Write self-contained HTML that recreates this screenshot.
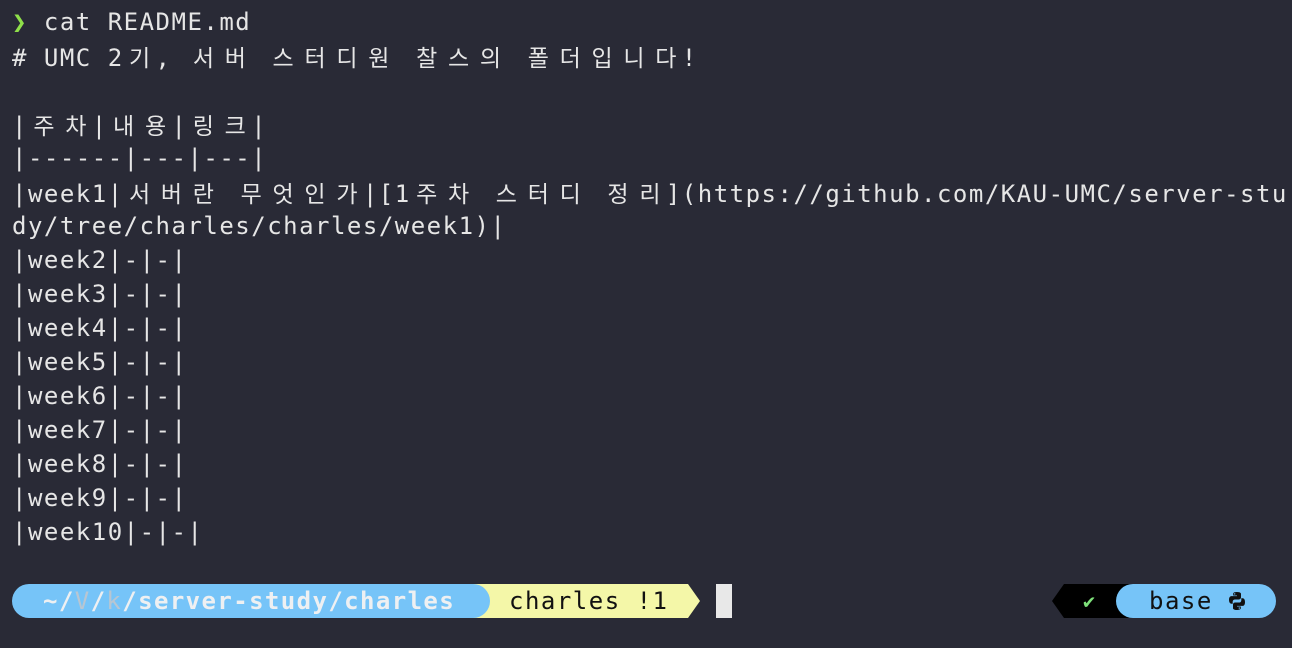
<!DOCTYPE html>
<html><head><meta charset="utf-8"><style>
html,body{margin:0;padding:0;}
body{width:1292px;height:648px;background:#292a36;overflow:hidden;position:relative;
font-family:"DejaVu Sans Mono","Liberation Mono","Noto Sans CJK KR",monospace;font-size:24px;color:#e6e6e6;}
.l{position:absolute;left:12px;height:34px;line-height:34px;white-space:pre;letter-spacing:1.5px;}
.k{display:inline-block;width:31.9px;text-align:center;letter-spacing:0;font-family:"Noto Sans CJK KR","WenQuanYi Zen Hei",sans-serif;font-size:23px;}
.g{color:#8fe04a;}
.pill{position:absolute;top:584px;height:34px;line-height:34px;white-space:pre;}
</style></head><body>
<div class="l" style="top:5px"><span class="g">❯</span> cat README.md</div>
<div class="l" style="top:39px"># UMC 2<span class="k">기</span>, <span class="k">서</span><span class="k">버</span> <span class="k">스</span><span class="k">터</span><span class="k">디</span><span class="k">원</span> <span class="k">찰</span><span class="k">스</span><span class="k">의</span> <span class="k">폴</span><span class="k">더</span><span class="k">입</span><span class="k">니</span><span class="k">다</span>!</div>
<div class="l" style="top:107px">|<span class="k">주</span><span class="k">차</span>|<span class="k">내</span><span class="k">용</span>|<span class="k">링</span><span class="k">크</span>|</div>
<div class="l" style="top:141px">|------|---|---|</div>
<div class="l" style="top:175px">|week1|<span class="k">서</span><span class="k">버</span><span class="k">란</span> <span class="k">무</span><span class="k">엇</span><span class="k">인</span><span class="k">가</span>|[1<span class="k">주</span><span class="k">차</span> <span class="k">스</span><span class="k">터</span><span class="k">디</span> <span class="k">정</span><span class="k">리</span>](https://github.com/KAU-UMC/server-stu</div>
<div class="l" style="top:209px">dy/tree/charles/charles/week1)|</div>
<div class="l" style="top:243px">|week2|-|-|</div>
<div class="l" style="top:277px">|week3|-|-|</div>
<div class="l" style="top:311px">|week4|-|-|</div>
<div class="l" style="top:345px">|week5|-|-|</div>
<div class="l" style="top:379px">|week6|-|-|</div>
<div class="l" style="top:413px">|week7|-|-|</div>
<div class="l" style="top:447px">|week8|-|-|</div>
<div class="l" style="top:481px">|week9|-|-|</div>
<div class="l" style="top:515px">|week10|-|-|</div>

<svg style="position:absolute;left:0;top:584px" width="1292" height="34">
<path d="M470 0 H688 L700 17 L688 34 H470 Z" fill="#f4f7a8"/>
<rect x="12" y="0" width="478" height="34" rx="17" fill="#76c4f8"/>
<rect x="716" y="0" width="16" height="34" fill="#e8e8e8"/>
<path d="M1064 0 H1140 V34 H1064 L1052 17 Z" fill="#000"/>
<rect x="1116" y="0" width="160" height="34" rx="17" fill="#76c4f8"/>
</svg>
<div class="pill" style="left:43px;font-weight:bold;color:#eef0f2;letter-spacing:1.4px">~/<span style="color:#b8c6d2;font-weight:normal">V</span>/<span style="color:#b8c6d2;font-weight:normal">k</span>/server-study/charles</div>
<div class="pill" style="left:509px;color:#111;letter-spacing:1.5px">charles !1</div>
<div class="pill" style="left:1083px;color:#7ee07a;font-size:20px">✔</div>
<div class="pill" style="left:1149px;color:#111;letter-spacing:1.5px">base</div>
<svg style="position:absolute;left:1227px;top:591px" width="20" height="20" viewBox="0 0 20 20">
<path d="M9.8 1C6 1 6.2 2.7 6.2 2.7V4.5h3.8v.6H4.7S2 4.8 2 8.8s2.3 3.9 2.3 3.9h1.4v-1.9s-.1-2.3 2.3-2.3h3.8s2.2 0 2.2-2.2V2.9S14.3 1 9.8 1zM7.7 2.2a.7.7 0 110 1.4.7.7 0 010-1.4z" fill="#111"/>
<path d="M10.2 19c3.8 0 3.6-1.7 3.6-1.7v-1.8H10v-.6h5.3s2.7.3 2.7-3.7-2.3-3.9-2.3-3.9h-1.4v1.9s.1 2.3-2.3 2.3H8.2s-2.2 0-2.2 2.2v3.4S5.7 19 10.2 19zm2.1-1.2a.7.7 0 110-1.4.7.7 0 010 1.4z" fill="#111"/>
</svg>
</body></html>
